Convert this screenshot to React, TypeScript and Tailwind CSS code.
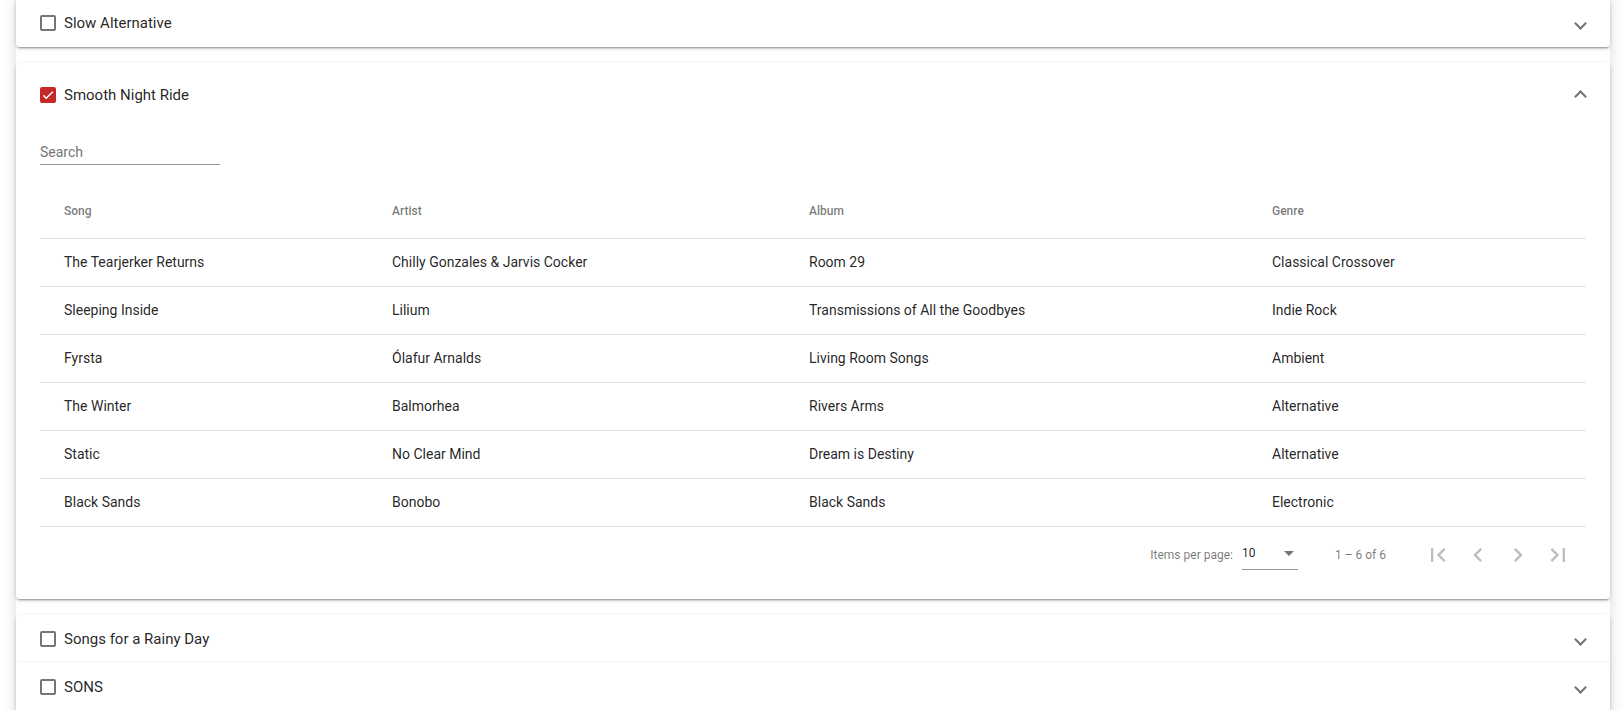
import React from "react";

const PANEL_SHADOW =
  "shadow-[0_3px_1px_-2px_rgba(0,0,0,0.2),0_2px_2px_0_rgba(0,0,0,0.14),0_1px_5px_0_rgba(0,0,0,0.12)]";

const songs = [
  { song: "The Tearjerker Returns", artist: "Chilly Gonzales & Jarvis Cocker", album: "Room 29", genre: "Classical Crossover" },
  { song: "Sleeping Inside", artist: "Lilium", album: "Transmissions of All the Goodbyes", genre: "Indie Rock" },
  { song: "Fyrsta", artist: "Ólafur Arnalds", album: "Living Room Songs", genre: "Ambient" },
  { song: "The Winter", artist: "Balmorhea", album: "Rivers Arms", genre: "Alternative" },
  { song: "Static", artist: "No Clear Mind", album: "Dream is Destiny", genre: "Alternative" },
  { song: "Black Sands", artist: "Bonobo", album: "Black Sands", genre: "Electronic" },
];

function Checkbox({ checked }: { checked?: boolean }) {
  if (checked) {
    return (
      <span className="w-[16px] h-[16px] rounded-[2px] bg-[#c62828] flex items-center justify-center shrink-0">
        <svg width="14" height="14" viewBox="0 0 24 24">
          <path d="M4.1 12.7 9 17.6 20.3 6.3" fill="none" stroke="#fff" strokeWidth="2.6" />
        </svg>
      </span>
    );
  }
  return <span className="w-[16px] h-[16px] rounded-[2px] border-2 border-[#757575] shrink-0" />;
}

function Chevron({ up }: { up?: boolean }) {
  return (
    <span
      className={
        up
          ? "w-[9px] h-[9px] border-r-2 border-b-2 border-[#707070] rotate-[225deg] translate-y-[1px] mr-[1px]"
          : "w-[9px] h-[9px] border-r-2 border-b-2 border-[#707070] rotate-45 mr-[1px]"
      }
    />
  );
}

function PanelHeader({ title, checked, expanded }: { title: string; checked?: boolean; expanded?: boolean }) {
  return (
    <div className={`${expanded ? "h-[64px]" : "h-[48px]"} flex items-center px-[24px]`}>
      <Checkbox checked={checked} />
      <span className="ml-[8px] text-[15px] text-[rgba(0,0,0,0.87)] flex-1">{title}</span>
      <Chevron up={expanded} />
    </div>
  );
}

const cols = "grid grid-cols-[352px_417px_463px_1fr]";

function PageIcon({ d }: { d: string }) {
  return (
    <button className="w-[40px] h-[40px] flex items-center justify-center">
      <svg width="28" height="28" viewBox="0 0 24 24" fill="#bdbdbd">
        <path d={d} />
      </svg>
    </button>
  );
}

export default function App() {
  return (
    <div className="w-full min-h-screen bg-white overflow-hidden font-['Roboto','Liberation_Sans',sans-serif]">
      <div className="ml-[16px] mr-[13px] -mt-px bg-white shadow-[0_0_14px_rgba(0,0,0,0.14)]">
        {/* collapsed */}
        <div className={`bg-white rounded-b-[4px] ${PANEL_SHADOW}`}>
          <PanelHeader title="Slow Alternative" />
        </div>

        {/* expanded */}
        <div className={`bg-white rounded-[4px] my-[16px] ${PANEL_SHADOW}`}>
          <PanelHeader title="Smooth Night Ride" checked expanded />
          <div className="px-[24px] pb-[16px]">
            <div className="h-[56px] pt-[17px]">
              <input
                placeholder="Search"
                className="block w-[180px] h-[16px] leading-[16px] text-[14px] p-0 outline-none bg-transparent placeholder:text-[#757575]"
              />
              <div className="w-[180px] mt-[4px] border-b border-[#949494]" />
            </div>

            {/* table */}
            <div>
              <div className={`${cols} h-[56px] border-b border-[#e0e0e0] text-[12px] font-medium text-[rgba(0,0,0,0.54)]`}>
                <div className="pl-[24px] flex items-center">Song</div>
                <div className="flex items-center">Artist</div>
                <div className="flex items-center">Album</div>
                <div className="flex items-center">Genre</div>
              </div>
              {songs.map((s) => (
                <div key={s.song} className={`${cols} h-[48px] border-b border-[#e0e0e0] text-[14px] text-[rgba(0,0,0,0.87)]`}>
                  <div className="pl-[24px] flex items-center">{s.song}</div>
                  <div className="flex items-center">{s.artist}</div>
                  <div className="flex items-center">{s.album}</div>
                  <div className="flex items-center">{s.genre}</div>
                </div>
              ))}
            </div>

            {/* paginator */}
            <div className="h-[56px] flex items-center justify-end pr-[8px] text-[12px] text-[rgba(0,0,0,0.54)]">
              <span className="mr-[9px]">Items per page:</span>
              <div className="w-[56px] h-[24px] mt-[6px] flex items-start justify-between border-b border-[#949494]">
                <span className="text-[rgba(0,0,0,0.87)] leading-[14px]">10</span>
                <span className="mt-[5px] mr-[4px] w-0 h-0 border-l-[5px] border-r-[5px] border-t-[5px] border-l-transparent border-r-transparent border-t-[#757575]" />
              </div>
              <span className="ml-[37px] mr-[32px]">1 – 6 of 6</span>
              <div className="flex">
                <PageIcon d="M18.41 16.59L13.82 12l4.59-4.59L17 6l-6 6 6 6zM6 6h2v12H6z" />
                <PageIcon d="M15.41 7.41L14 6l-6 6 6 6 1.41-1.41L10.83 12z" />
                <PageIcon d="M10 6L8.59 7.41 13.17 12l-4.58 4.59L10 18l6-6z" />
                <PageIcon d="M5.59 7.41L10.18 12l-4.59 4.59L7 18l6-6-6-6zM16 6h2v12h-2z" />
              </div>
            </div>
          </div>
        </div>

        {/* collapsed */}
        <div className={`bg-white rounded-t-[4px] ${PANEL_SHADOW}`}>
          <PanelHeader title="Songs for a Rainy Day" />
        </div>
        <div className={`bg-white pb-[8px] ${PANEL_SHADOW}`}>
          <PanelHeader title="SONS" />
        </div>
      </div>
    </div>
  );
}
